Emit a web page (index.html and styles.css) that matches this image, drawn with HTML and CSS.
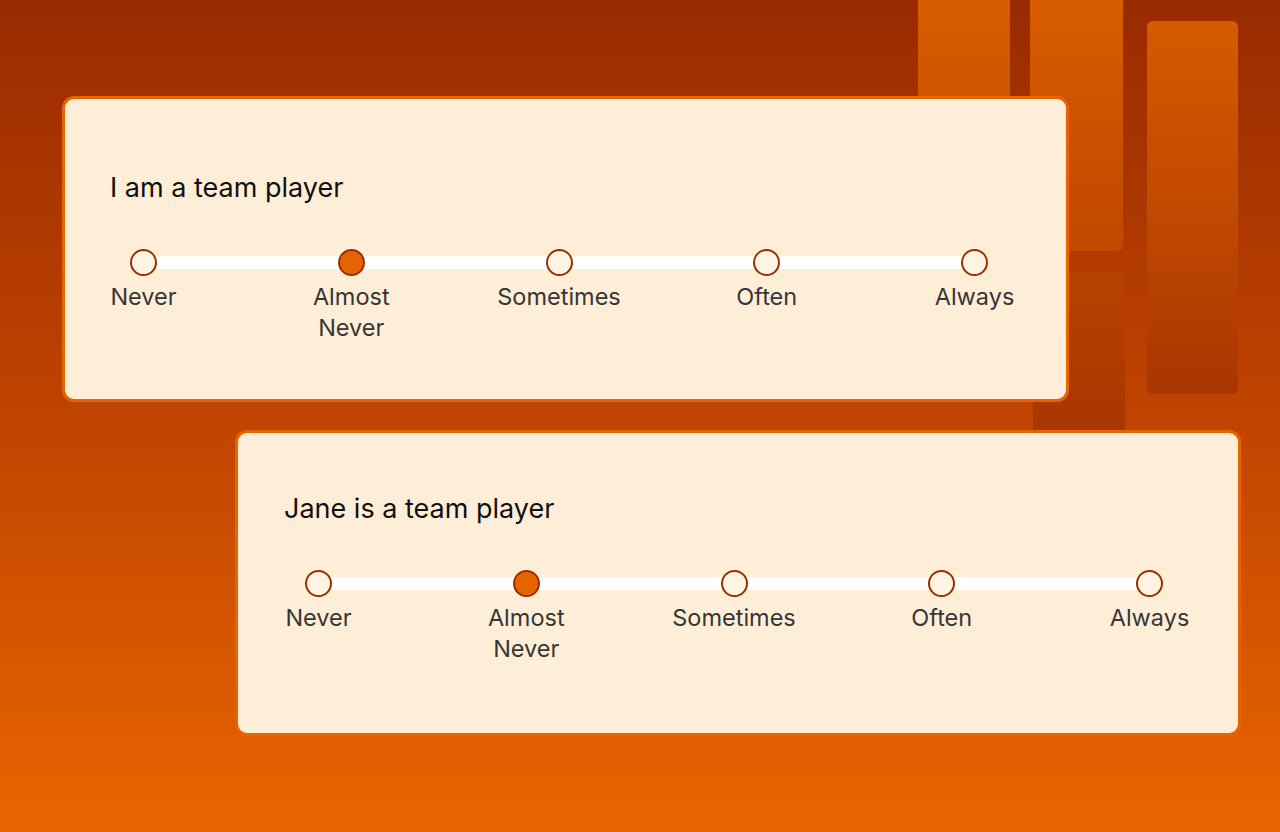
FILE: index.html
```html
<!DOCTYPE html>
<html lang="en">
<head>
<meta charset="utf-8">
<title>Team player survey</title>
<link rel="stylesheet" href="styles.css">
</head>
<body>
<div class="stage">
  <div class="deco deco--a"></div>
  <div class="deco deco--b"></div>
  <div class="deco deco--c"></div>
  <div class="deco deco--d"></div>

  <section class="card card--first">
    <h2 class="card__title">I am a team player</h2>
    <div class="scale">
      <div class="option"><span class="dot"></span><span class="label">Never</span></div>
      <div class="option"><span class="dot dot--on"></span><span class="label">Almost Never</span></div>
      <div class="option"><span class="dot"></span><span class="label">Sometimes</span></div>
      <div class="option"><span class="dot"></span><span class="label">Often</span></div>
      <div class="option"><span class="dot"></span><span class="label">Always</span></div>
    </div>
  </section>

  <section class="card card--second">
    <h2 class="card__title">Jane is a team player</h2>
    <div class="scale">
      <div class="option"><span class="dot"></span><span class="label">Never</span></div>
      <div class="option"><span class="dot dot--on"></span><span class="label">Almost Never</span></div>
      <div class="option"><span class="dot"></span><span class="label">Sometimes</span></div>
      <div class="option"><span class="dot"></span><span class="label">Often</span></div>
      <div class="option"><span class="dot"></span><span class="label">Always</span></div>
    </div>
  </section>
</div>
</body>
</html>
```

FILE: styles.css
```css
* { box-sizing: border-box; }

html, body {
  margin: 0;
  padding: 0;
}

body {
  width: 1280px;
  height: 832px;
  overflow: hidden;
  background: linear-gradient(180deg, #992a00 0%, #c04400 50%, #e96500 100%);
  font-family: Inter, "Noto Sans", sans-serif;
}

.stage {
  position: relative;
  width: 1280px;
  height: 832px;
  padding-top: 96px;
  display: flex;
  flex-direction: column;
}

.deco {
  position: absolute;
  border-radius: 6px;
  background: linear-gradient(180deg, #d85c00 0px, #c04800 250px, #a73500 440px) fixed;
}
.deco--a { left: 918px; top: -10px; width: 92px; height: 260px; }
.deco--b { left: 1030px; top: -10px; width: 93px; height: 261px; }
.deco--c { left: 1033px; top: 272px; width: 92px; height: 180px;
  background: linear-gradient(180deg, #b84200 0%, #a83400 100%); }
.deco--d { left: 1147px; top: 21px; width: 91px; height: 373px;
  background: linear-gradient(180deg, #d65a00 0%, #c24900 50%, #a83600 100%); }

.card {
  position: relative;
  z-index: 1;
  width: 1007px;
  height: 306px;
  background: #feeed7;
  border: 3px solid #e86400;
  border-radius: 12px;
}
.card--first {
  margin-left: 62px;
  padding: 72px 0 0 45px;
}
.card--second {
  margin-left: 235px;
  margin-top: 28px;
  width: 1006px;
  padding: 59px 0 0 46px;
}

.card__title {
  margin: 0;
  font-size: 27px;
  line-height: 34px;
  font-weight: 400;
  color: #111;
}

.scale {
  position: relative;
  margin-top: 44px;
  margin-left: 20px;
  width: 858px;
  display: flex;
  justify-content: space-between;
  align-items: flex-start;
}
.card--second .scale { margin-left: 21px; }

.scale::before {
  content: "";
  position: absolute;
  left: 13px;
  right: 13px;
  top: 7px;
  height: 13px;
  background: #ffffff;
}

.option {
  position: relative;
  width: 27px;
  display: flex;
  flex-direction: column;
  align-items: center;
}

.dot {
  display: block;
  width: 27px;
  height: 27px;
  border-radius: 50%;
  border: 2px solid #9a2e00;
  background: #fff4e4;
}
.dot--on {
  background: #e46400;
}

.label {
  flex: none;
  width: 136px;
  margin-top: 5px;
  text-align: center;
  font-size: 23.5px;
  line-height: 31px;
  color: #363636;
}
```
